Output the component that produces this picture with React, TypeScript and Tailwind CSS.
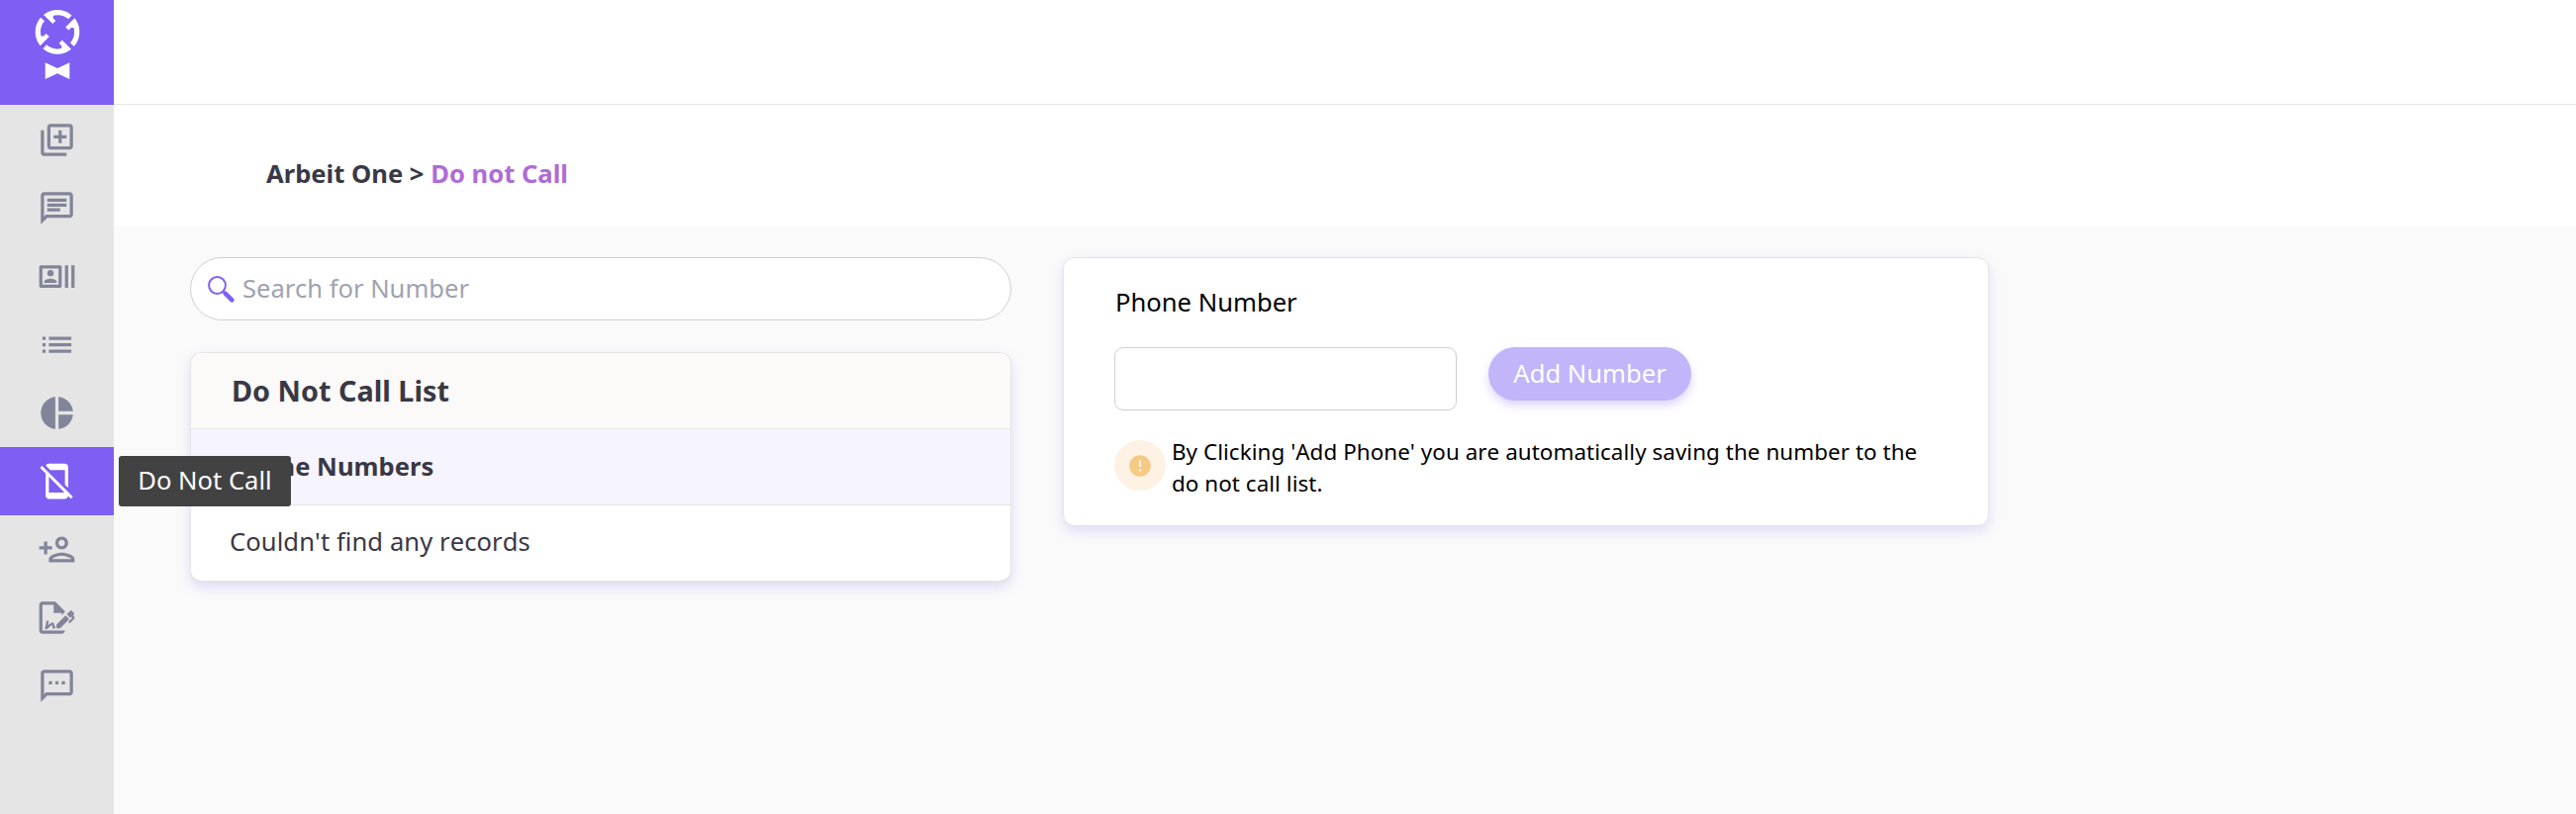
import type { ReactNode } from "react";
import {
  MdError,
  MdList,
  MdMobileOff,
  MdOutlineChat,
  MdOutlineLibraryAdd,
  MdOutlinePersonAdd,
  MdOutlineRecentActors,
  MdOutlineSms,
  MdPieChart,
} from "react-icons/md";

function FileSignIcon() {
  return (
    <svg viewBox="0 0 24 24" width="1em" height="1em" fill="currentColor">
      <path d="M19.7 12.9L14 18.6H11.7V16.3L17.4 10.6L19.7 12.9M23.1 12.1C23.1 12.4 22.8 12.7 22.5 13L20 15.5L19.1 14.6L21.7 12L21.1 11.4L20.4 12.1L18.1 9.8L20.3 7.7C20.5 7.5 20.9 7.5 21.2 7.7L22.6 9.1C22.8 9.3 22.8 9.7 22.6 10C22.4 10.2 22.2 10.4 22.2 10.6C22.2 10.8 22.4 11 22.6 11.2C22.9 11.5 23.2 11.8 23.1 12.1M3 20V4H10V9H15V10.5L17 8.5V8L11 2H3C1.9 2 1 2.9 1 4V20C1 21.1 1.9 22 3 22H15C16.1 22 17 21.1 17 20H3M11 17.1C10.8 17.1 10.6 17.2 10.5 17.2L10 15H8.5L6.4 16.7L7 14H5.5L4.5 19H6L8.9 16.4L9.5 18.7H10.5L11 18.6V17.1Z" />
    </svg>
  );
}

function Logo() {
  return (
    <svg viewBox="0 0 46 72" className="h-[72px] w-[46px]" fill="#fff">
      {[0, 90, 180, 270].map((angle) => (
        <path
          key={angle}
          transform={`translate(23 23.3) rotate(${angle})`}
          d="M-14 -17.4A22.3 22.3 0 0 1 14 -17.4L14.4 -16.6L11 -13A17 17 0 0 0 -4.2 -16.5L-4.2 -13.9L-1.7 -11.4L-4.7 -8.2Z"
        />
      ))}
      <path d="M10.7 54.2L23 60L35.3 54.2V71L23 65.2L10.7 71Z" />
    </svg>
  );
}

type NavItem = {
  label: string;
  icon: ReactNode;
  active?: boolean;
};

const navItems: NavItem[] = [
  { label: "Add", icon: <MdOutlineLibraryAdd /> },
  { label: "Chat", icon: <MdOutlineChat /> },
  { label: "Contacts", icon: <MdOutlineRecentActors /> },
  { label: "Lists", icon: <MdList /> },
  { label: "Reports", icon: <MdPieChart /> },
  { label: "Do Not Call", icon: <MdMobileOff />, active: true },
  { label: "Add User", icon: <MdOutlinePersonAdd /> },
  { label: "Sign", icon: <FileSignIcon /> },
  { label: "Messages", icon: <MdOutlineSms /> },
];

function Sidebar() {
  return (
    <aside className="w-[115px] shrink-0 bg-[#e5e5e5]">
      <div className="flex h-[106px] justify-center bg-[#7f5ef3] pt-[9px]">
        <Logo />
      </div>
      <nav className="pt-px">
        {navItems.map((item) => (
          <div
            key={item.label}
            className={
              item.active
                ? "relative flex h-[69px] items-center justify-center bg-[#7f5ef3] text-white"
                : "flex h-[69px] items-center justify-center text-[#828599]"
            }
          >
            <span className="text-[39px]">{item.icon}</span>
            {item.active && (
              <span className="absolute top-[9px] left-[120px] z-10 flex h-[51px] w-[174px] items-center justify-center rounded-[3px] bg-[#424242] text-[25.6px] whitespace-nowrap text-white">
                {item.label}
              </span>
            )}
          </div>
        ))}
      </nav>
    </aside>
  );
}

function SearchBox() {
  return (
    <div className="flex h-16 items-center rounded-full border border-[#cfcfcf] bg-white pl-[17px]">
      <svg viewBox="0 0 27 27" className="h-[27px] w-[27px]" fill="none" stroke="#7f5ef3">
        <circle cx="9.5" cy="9.5" r="8.4" strokeWidth="2" />
        <path d="M15.4 15.4L18 18" strokeWidth="2" />
        <path d="M17.6 17.6L24.4 24.4" strokeWidth="4.4" strokeLinecap="round" />
      </svg>
      <input
        placeholder="Search for Number"
        className="ml-2 w-[600px] bg-transparent text-[25.6px] outline-none placeholder:text-[#9fa3b0]"
      />
    </div>
  );
}

function DoNotCallList() {
  return (
    <section className="mt-8 overflow-hidden rounded-[12px] border border-b-2 border-[#e5e5e5] bg-white text-[#3a3845] shadow-[0_5px_13px_rgba(127,94,243,0.2)]">
      <h2 className="flex h-[77px] items-center border-b border-[#e5e5e5] bg-[#fbfaf8] pl-[41px] text-[28.8px] font-bold">
        Do Not Call List
      </h2>
      <div className="flex h-[77px] items-center border-b border-[#e5e5e5] bg-[#f6f5ff] pl-10 text-[25.6px] font-bold">
        Phone Numbers
      </div>
      <div className="flex h-[76px] items-center pb-[2px] pl-[39px] text-[25.6px] tracking-[0.07px] [font-kerning:none]">
        Couldn't find any records
      </div>
    </section>
  );
}

function AddNumberCard() {
  return (
    <section className="h-[272px] w-[936px] rounded-[12px] border border-[#e5e5e5] bg-white pt-[27px] pl-[51px] text-black shadow-[0_5px_13px_rgba(127,94,243,0.2)]">
      <p className="pl-px text-[25.6px] leading-[35px]">Phone Number</p>
      <div className="mt-[28px] flex items-start gap-8">
        <input className="h-16 w-[346px] rounded-[9px] border border-[#cfcfcf] bg-white outline-none" />
        <button className="h-[54px] w-[205px] rounded-full bg-[#c2b5fa] text-[25.6px] text-white shadow-[0_5px_10px_rgba(127,94,243,0.25)]">
          Add Number
        </button>
      </div>
      <div className="mt-[25px] flex">
        <span className="mt-[5px] flex h-[51px] w-[52px] items-center justify-center rounded-full bg-[#fdf2e3] text-[26px] text-[#f6ca84]">
          <MdError />
        </span>
        <p className="mt-px ml-[6px] w-[770px] text-[22.4px] leading-8 tracking-[0.06px] [font-kerning:none]">
          By Clicking 'Add Phone' you are automatically saving the number to the do not call list.
        </p>
      </div>
    </section>
  );
}

export default function App() {
  return (
    <div className="flex h-screen overflow-hidden bg-[#fafafa] font-['Noto_Sans',sans-serif]">
      <Sidebar />
      <div className="flex-1">
        <header className="h-[106px] border-b border-[#e5e5e5] bg-white" />
        <div className="flex h-[122px] items-center bg-white pt-[18px] pl-[154px]">
          <h1 className="text-[25.6px] font-bold text-[#3a3845]">
            Arbeit One &gt; <span className="text-[#af6bd8]">Do not Call</span>
          </h1>
        </div>
        <main className="flex items-start gap-[52px] pt-8 pl-[77px]">
          <div className="w-[830px]">
            <SearchBox />
            <DoNotCallList />
          </div>
          <AddNumberCard />
        </main>
      </div>
    </div>
  );
}
